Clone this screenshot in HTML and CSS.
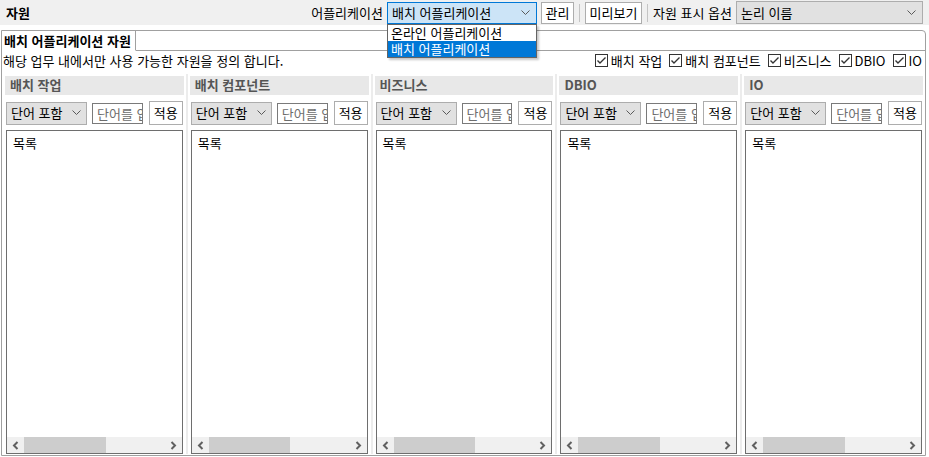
FILE: index.html
```html
<!DOCTYPE html>
<html lang="ko">
<head>
<meta charset="utf-8">
<title>자원</title>
<link rel="stylesheet" href="styles.css">
</head>
<body>
<div class="topbar">
  <div class="title">자원</div>
  <span class="lbl lbl-app">어플리케이션</span>
  <div class="combo combo-app">
    <span class="combo-text">배치 어플리케이션</span>
    <svg class="chev" width="9" height="6" viewBox="0 0 9 6"><polyline points="0.5,0.5 4.5,4.5 8.5,0.5"/></svg>
    <div class="popup">
      <div class="item">온라인 어플리케이션</div>
      <div class="item sel">배치 어플리케이션</div>
    </div>
  </div>
  <button class="btn btn-manage">관리</button>
  <span class="sep"></span>
  <button class="btn btn-preview">미리보기</button>
  <span class="sep"></span>
  <span class="lbl">자원 표시 옵션</span>
  <div class="combo combo-opt">
    <span class="combo-text">논리 이름</span>
    <svg class="chev" width="9" height="6" viewBox="0 0 9 6"><polyline points="0.5,0.5 4.5,4.5 8.5,0.5"/></svg>
  </div>
</div>

<div class="folder">
  <div class="tabs"><div class="tab">배치 어플리케이션 자원</div></div>
  <div class="desc-row">
    <span class="desc">해당 업무 내에서만 사용 가능한 자원을 정의 합니다.</span>
    <div class="checks">
      <label class="chk"><span class="box"><svg width="11" height="11" viewBox="0 0 11 11"><polyline points="1.5,5.5 4,8 9.5,2.5"/></svg></span>배치 작업</label>
      <label class="chk"><span class="box"><svg width="11" height="11" viewBox="0 0 11 11"><polyline points="1.5,5.5 4,8 9.5,2.5"/></svg></span>배치 컴포넌트</label>
      <label class="chk"><span class="box"><svg width="11" height="11" viewBox="0 0 11 11"><polyline points="1.5,5.5 4,8 9.5,2.5"/></svg></span>비즈니스</label>
      <label class="chk"><span class="box"><svg width="11" height="11" viewBox="0 0 11 11"><polyline points="1.5,5.5 4,8 9.5,2.5"/></svg></span>DBIO</label>
      <label class="chk"><span class="box"><svg width="11" height="11" viewBox="0 0 11 11"><polyline points="1.5,5.5 4,8 9.5,2.5"/></svg></span>IO</label>
    </div>
  </div>

  <div class="cols">
    <div class="col">
      <div class="col-head">배치 작업</div>
      <div class="filter">
        <div class="combo combo-filter"><span class="combo-text">단어 포함</span><svg class="chev" width="9" height="6" viewBox="0 0 9 6"><polyline points="0.5,0.5 4.5,4.5 8.5,0.5"/></svg></div>
        <input class="search" placeholder="단어를 입력하세요">
        <button class="btn btn-apply">적용</button>
      </div>
      <div class="list">
        <div class="list-body">목록</div>
        <div class="hscroll">
          <span class="arrow"><svg width="7" height="9" viewBox="0 0 7 9"><polyline points="5.5,1 2,4.5 5.5,8"/></svg></span>
          <span class="track"><span class="thumb"></span></span>
          <span class="arrow"><svg width="7" height="9" viewBox="0 0 7 9"><polyline points="1.5,1 5,4.5 1.5,8"/></svg></span>
        </div>
      </div>
    </div>
    <div class="sash"></div>
    <div class="col">
      <div class="col-head">배치 컴포넌트</div>
      <div class="filter">
        <div class="combo combo-filter"><span class="combo-text">단어 포함</span><svg class="chev" width="9" height="6" viewBox="0 0 9 6"><polyline points="0.5,0.5 4.5,4.5 8.5,0.5"/></svg></div>
        <input class="search" placeholder="단어를 입력하세요">
        <button class="btn btn-apply">적용</button>
      </div>
      <div class="list">
        <div class="list-body">목록</div>
        <div class="hscroll">
          <span class="arrow"><svg width="7" height="9" viewBox="0 0 7 9"><polyline points="5.5,1 2,4.5 5.5,8"/></svg></span>
          <span class="track"><span class="thumb"></span></span>
          <span class="arrow"><svg width="7" height="9" viewBox="0 0 7 9"><polyline points="1.5,1 5,4.5 1.5,8"/></svg></span>
        </div>
      </div>
    </div>
    <div class="sash"></div>
    <div class="col">
      <div class="col-head">비즈니스</div>
      <div class="filter">
        <div class="combo combo-filter"><span class="combo-text">단어 포함</span><svg class="chev" width="9" height="6" viewBox="0 0 9 6"><polyline points="0.5,0.5 4.5,4.5 8.5,0.5"/></svg></div>
        <input class="search" placeholder="단어를 입력하세요">
        <button class="btn btn-apply">적용</button>
      </div>
      <div class="list">
        <div class="list-body">목록</div>
        <div class="hscroll">
          <span class="arrow"><svg width="7" height="9" viewBox="0 0 7 9"><polyline points="5.5,1 2,4.5 5.5,8"/></svg></span>
          <span class="track"><span class="thumb"></span></span>
          <span class="arrow"><svg width="7" height="9" viewBox="0 0 7 9"><polyline points="1.5,1 5,4.5 1.5,8"/></svg></span>
        </div>
      </div>
    </div>
    <div class="sash"></div>
    <div class="col">
      <div class="col-head">DBIO</div>
      <div class="filter">
        <div class="combo combo-filter"><span class="combo-text">단어 포함</span><svg class="chev" width="9" height="6" viewBox="0 0 9 6"><polyline points="0.5,0.5 4.5,4.5 8.5,0.5"/></svg></div>
        <input class="search" placeholder="단어를 입력하세요">
        <button class="btn btn-apply">적용</button>
      </div>
      <div class="list">
        <div class="list-body">목록</div>
        <div class="hscroll">
          <span class="arrow"><svg width="7" height="9" viewBox="0 0 7 9"><polyline points="5.5,1 2,4.5 5.5,8"/></svg></span>
          <span class="track"><span class="thumb"></span></span>
          <span class="arrow"><svg width="7" height="9" viewBox="0 0 7 9"><polyline points="1.5,1 5,4.5 1.5,8"/></svg></span>
        </div>
      </div>
    </div>
    <div class="sash"></div>
    <div class="col">
      <div class="col-head">IO</div>
      <div class="filter">
        <div class="combo combo-filter"><span class="combo-text">단어 포함</span><svg class="chev" width="9" height="6" viewBox="0 0 9 6"><polyline points="0.5,0.5 4.5,4.5 8.5,0.5"/></svg></div>
        <input class="search" placeholder="단어를 입력하세요">
        <button class="btn btn-apply">적용</button>
      </div>
      <div class="list">
        <div class="list-body">목록</div>
        <div class="hscroll">
          <span class="arrow"><svg width="7" height="9" viewBox="0 0 7 9"><polyline points="5.5,1 2,4.5 5.5,8"/></svg></span>
          <span class="track"><span class="thumb"></span></span>
          <span class="arrow"><svg width="7" height="9" viewBox="0 0 7 9"><polyline points="1.5,1 5,4.5 1.5,8"/></svg></span>
        </div>
      </div>
    </div>
  </div>
</div>
</body>
</html>
```

FILE: styles.css
```css
* { box-sizing: border-box; }

html, body {
  margin: 0;
  padding: 0;
  background: #ffffff;
  color: #000000;
  font-family: "Noto Sans CJK KR", "Noto Sans", sans-serif;
  font-size: 13px;
  line-height: 16px;
  overflow: hidden;
}

/* ---------- top bar ---------- */
.topbar {
  height: 25px;
  background: #f0f0f0;
  display: flex;
  align-items: center;
  padding: 0 6px 0 6px;
}

.title {
  font-size: 13px;
  font-weight: bold;
}

.lbl { white-space: nowrap; }
.lbl-app { margin-left: auto; margin-right: 4px; }

.combo {
  position: relative;
  display: flex;
  align-items: center;
  justify-content: space-between;
  height: 22px;
  border: 1px solid #adadad;
  background: #e1e1e1;
  padding: 0 6px 0 4px;
  white-space: nowrap;
}

.chev { flex: none; }
.chev polyline { fill: none; stroke: #5a5a5a; stroke-width: 1; }

.combo-app {
  width: 150px;
  background: #cce4f7;
  border-color: #0078d7;
}

.combo-opt {
  width: 187px;
  margin-left: 4px;
  height: 23px;
}

.popup {
  position: absolute;
  left: -1px;
  top: 21px;
  width: 150px;
  background: #ffffff;
  border: 1px solid #646464;
  box-shadow: 2px 2px 2px rgba(0, 0, 0, 0.22);
  z-index: 10;
}

.item {
  height: 16px;
  line-height: 16px;
  padding-left: 3px;
  white-space: nowrap;
}

.item.sel {
  background: #0078d7;
  color: #ffffff;
}

.btn {
  font-family: inherit;
  font-size: 13px;
  line-height: 16px;
  color: #000000;
  background: #ffffff;
  border: 1px solid #adadad;
  border-radius: 0;
  padding: 0;
  height: 22px;
  margin: 0;
}

.btn-manage { width: 33px; margin-left: 4px; }
.btn-preview { width: 57px; }

.sep {
  width: 1px;
  height: 18px;
  background: #c4c4c4;
  margin: 0 5px;
}

/* ---------- tab folder ---------- */
.folder {
  margin: 5px 3px 0 1px;
  height: 426px;
  border: 1px solid #a0a0a0;
  border-top-right-radius: 4px;
  display: flex;
  flex-direction: column;
}

.tabs {
  height: 20px;
  border-bottom: 1px solid #a0a0a0;
  display: flex;
}

.tab {
  height: 20px;
  width: 134px;
  border-right: 1px solid #a0a0a0;
  border-bottom: 1px solid #ffffff;
  background: #ffffff;
  font-weight: bold;
  padding: 2px 0 0 2px;
  line-height: 16px;
  white-space: nowrap;
}

.desc-row {
  display: flex;
  justify-content: space-between;
  align-items: center;
  height: 18px;
  padding: 1px 3px 0 1px;
}

.desc { white-space: nowrap; }

.checks {
  display: flex;
  align-items: center;
}

.chk {
  display: flex;
  align-items: center;
  margin-left: 7px;
  white-space: nowrap;
}

.chk:first-child { margin-left: 0; }

.box {
  width: 13px;
  height: 13px;
  border: 1px solid #333333;
  background: #ffffff;
  margin-right: 3px;
  display: flex;
  align-items: center;
  justify-content: center;
}

.box polyline { fill: none; stroke: #333333; stroke-width: 1.4; }

/* ---------- columns ---------- */
.cols {
  flex: 1;
  display: flex;
  padding: 7px 2px 1px 3px;
  min-height: 0;
}

.sash {
  width: 2px;
  margin: -2px 2px 0 2px;
  background: #ececec;
  flex: none;
}

.col {
  flex: 1;
  min-width: 0;
  display: flex;
  flex-direction: column;
}

.col-head {
  height: 19px;
  background: #e8e8e8;
  color: #555555;
  font-weight: bold;
  padding: 1px 0 0 5px;
  white-space: nowrap;
}

.filter {
  display: flex;
  align-items: center;
  margin-top: 6px;
  padding: 0 1px;
  height: 24px;
}

.combo-filter {
  width: 81px;
  flex: none;
  height: 23px;
  padding: 0 5px 0 4px;
}

.search {
  flex: 1;
  min-width: 0;
  height: 21px;
  margin: 0 6px 0 5px;
  border: 1px solid #7a7a7a;
  border-radius: 0;
  padding: 0 0 0 4px;
  font-family: inherit;
  font-size: 13px;
  outline: none;
}

.search::placeholder { color: #6d6d6d; opacity: 1; }

.btn-apply {
  width: 34px;
  height: 24px;
  flex: none;
}

.list {
  flex: 1;
  margin: 5px 1px 0 1px;
  border: 1px solid #6e6e6e;
  background: #ffffff;
  display: flex;
  flex-direction: column;
  min-height: 0;
}

.list-body {
  flex: 1;
  padding: 4px 0 0 6px;
}

.hscroll {
  height: 16px;
  background: #f0f0f0;
  display: flex;
  align-items: center;
}

.arrow {
  width: 17px;
  height: 16px;
  display: flex;
  align-items: center;
  justify-content: center;
  flex: none;
}

.arrow polyline { fill: none; stroke: #606060; stroke-width: 2; }

.track {
  flex: 1;
  height: 16px;
  display: flex;
}

.thumb {
  width: 58%;
  height: 16px;
  background: #cdcdcd;
}
```
